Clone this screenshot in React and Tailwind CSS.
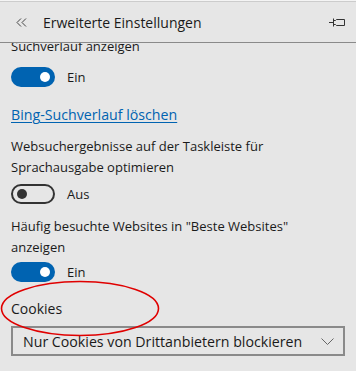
import React from 'react';

const Toggle = ({ on, label }) => (
  <div className="flex items-center">
    {on ? (
      <div className="w-[44px] h-[20px] rounded-full bg-[#0063b1] flex items-center justify-end pr-[5px]">
        <div className="w-[10px] h-[10px] rounded-full bg-white" />
      </div>
    ) : (
      <div className="w-[44px] h-[20px] rounded-full border-2 border-[#333333] flex items-center pl-[4px]">
        <div className="w-[10px] h-[10px] rounded-full bg-[#333333]" />
      </div>
    )}
    <span className="ml-[12px] text-[13px] leading-[20px] text-[#1a1a1a]">{label}</span>
  </div>
);

const PinIcon = () => (
  <svg width="16" height="11" viewBox="0 0 16 11" fill="none" stroke="#333" strokeWidth="1">
    <path d="M0 5.5H4" />
    <path d="M4.5 1.5V9.5" />
    <path d="M4.5 3.5H6.5L7.5 2.5H15.5V8.5H7.5L6.5 7.5H4.5" />
  </svg>
);

const BackIcon = () => (
  <svg width="11" height="9" viewBox="0 0 11 9" fill="none" stroke="#444" strokeWidth="1">
    <path d="M5 0.5L1 4.5L5 8.5" />
    <path d="M10 0.5L6 4.5L10 8.5" />
  </svg>
);

export default function App() {
  return (
    <div className="relative w-[356px] h-[371px] bg-[#e6e6e6] overflow-hidden flex flex-col font-['Segoe_UI','Open_Sans',sans-serif] text-[#1a1a1a]">
      <div className="h-px bg-[#f4f4f4]" />
      <div className="h-px bg-[#cccccc]" />
      <header className="h-[41px] flex items-center pl-[16px] pr-[11px] border-b border-[#8a8a8a] bg-[#e6e6e6] relative z-10">
        <div className="w-[27px]">
          <BackIcon />
        </div>
        <h1 className="text-[14px] text-[#1a1a1a] flex-1">Erweiterte Einstellungen</h1>
        <PinIcon />
      </header>
      <div className="flex-1 overflow-hidden px-[11px]">
        <div className="-mt-[7px] flex flex-col items-start text-[13px] leading-[21px]">
          <p>Suchverlauf anzeigen</p>
          <div className="mt-[10px]">
            <Toggle on label="Ein" />
          </div>
          <a href="#" className="mt-[17px] text-[14.2px] text-[#0063b1] underline underline-offset-2">
            Bing-Suchverlauf löschen
          </a>
          <p className="mt-[11px]">
            Websuchergebnisse auf der Taskleiste für
            <br />
            Sprachausgabe optimieren
          </p>
          <div className="mt-[6px]">
            <Toggle label="Aus" />
          </div>
          <p className="mt-[12px]">
            Häufig besuchte Websites in "Beste Websites"
            <br />
            anzeigen
          </p>
          <div className="mt-[4px]">
            <Toggle on label="Ein" />
          </div>
          <p className="mt-[16px] text-[14px]">Cookies</p>
          <div className="mt-[7px] w-full h-[30px] border-2 border-[#8a8a8a] flex items-center justify-between pl-[10px] pr-[9px]">
            <span className="text-[14.2px]">Nur Cookies von Drittanbietern blockieren</span>
            <svg width="13" height="7" viewBox="0 0 13 7" fill="none" stroke="#666" strokeWidth="1">
              <path d="M0.5 0.5L6.5 6.5L12.5 0.5" />
            </svg>
          </div>
        </div>
      </div>
      <svg className="absolute left-0 top-[279px] pointer-events-none" width="164" height="60" viewBox="0 0 164 60">
        <ellipse cx="80" cy="29.5" rx="78.5" ry="27" fill="none" stroke="#e00000" strokeWidth="1.6" />
      </svg>
    </div>
  );
}
